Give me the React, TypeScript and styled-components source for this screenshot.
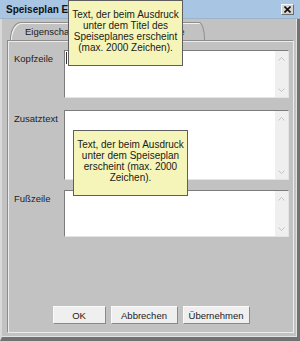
import React from 'react';
import styled, { createGlobalStyle } from 'styled-components';

const GlobalStyle = createGlobalStyle`
  html, body {
    margin: 0;
    padding: 0;
    background: #c2c2c2;
    overflow: hidden;
  }
  * {
    box-sizing: border-box;
  }
`;

const Window = styled.div`
  position: relative;
  width: 300px;
  height: 341px;
  display: flex;
  flex-direction: column;
  background: #c2c2c2;
  font-family: 'Liberation Sans', Arial, sans-serif;
  color: #1a1a1a;
  overflow: hidden;
`;

const TitleBar = styled.div`
  height: 19px;
  flex-shrink: 0;
  display: flex;
  align-items: center;
  justify-content: space-between;
  padding: 0 6px 0 6px;
  background: #a8c5e3;
  border-bottom: 1px solid #9fb3c7;
`;

const Title = styled.span`
  font-size: 10px;
  font-weight: bold;
  color: #111;
`;

const CloseButton = styled.div`
  width: 13px;
  height: 11px;
  margin-top: 1px;
  display: flex;
  align-items: center;
  justify-content: center;
  background: #d4d4d4;
  border: 1px solid;
  border-color: #f6f6f6 #6c6c6c #6c6c6c #f6f6f6;
`;

const Frame = styled.div`
  flex: 1;
  display: flex;
  flex-direction: column;
  padding: 3px 3px 4px 5px;
  border-left: 2px solid #d9d9d9;
  border-right: 3px solid #727272;
  border-bottom: 4px solid #727272;
  box-shadow: inset -1px -1px 0 #e2e2e2;
`;

const TabRow = styled.div`
  display: flex;
  height: 18px;
  padding-left: 3px;
  flex-shrink: 0;
`;

const Tab = styled.div<{ $width: number; $selected?: boolean }>`
  width: ${(p) => p.$width}px;
  height: 18px;
  padding-left: 14px;
  padding-top: 3px;
  font-size: 9.5px;
  line-height: 12px;
  white-space: nowrap;
  overflow: hidden;
  background: #c2c2c2;
  border: 1px solid #8e8e8e;
  border-bottom: none;
  border-top-left-radius: 11px 17px;
  border-top-right-radius: 6px 17px;
  box-shadow: inset 1px 1px 0 #f2f2f2;
  margin-right: -1px;
  position: relative;
  z-index: ${(p) => (p.$selected ? 2 : 1)};
`;

const Panel = styled.div`
  flex: 1;
  display: flex;
  flex-direction: column;
  padding: 9px 4px 8px 6px;
  border: 1px solid;
  border-color: #8c8c8c #ececec #ececec #8c8c8c;
  box-shadow: inset 1px 1px 0 #ececec;
`;

const Row = styled.div<{ $gap: number }>`
  display: grid;
  grid-template-columns: 50px 1fr;
  margin-bottom: ${(p) => p.$gap}px;
`;

const Label = styled.div`
  font-size: 9.5px;
  padding-top: 3px;
  color: #222;
`;

const ScrollPane = styled.div<{ $height: number }>`
  height: ${(p) => p.$height}px;
  display: flex;
  background: #fff;
  border: 1px solid;
  border-color: #7c7c7c #e4e4e4 #e4e4e4 #7c7c7c;
`;

const Editor = styled.div`
  flex: 1;
  padding: 1px 1px;
`;

const Caret = styled.div`
  width: 1px;
  height: 12px;
  background: #333;
`;

const ScrollTrack = styled.div`
  width: 13px;
  display: flex;
  flex-direction: column;
  justify-content: space-between;
  align-items: center;
  padding: 6px 0 5px;
  background: #efefef;
`;

const ButtonBar = styled.div`
  margin-top: auto;
  display: flex;
  justify-content: center;
  gap: 5px;
  padding-right: 1px;
`;

const Button = styled.div<{ $width: number }>`
  width: ${(p) => p.$width}px;
  height: 18px;
  display: flex;
  align-items: center;
  justify-content: center;
  font-size: 9.5px;
  color: #1a1a1a;
  background: #efefef;
  border: 1px solid;
  border-color: #fafafa #8a8a8a #8a8a8a #fafafa;
`;

const Tooltip = styled.div<{ $left: number; $top: number }>`
  position: absolute;
  left: ${(p) => p.$left}px;
  top: ${(p) => p.$top}px;
  width: 115px;
  padding: 8px 2px 12px;
  background: #f5f5b9;
  border: 1px solid #5e5e5e;
  font-size: 10px;
  line-height: 11px;
  text-align: center;
  color: #1a1a1a;
  z-index: 10;
`;

const Chevron = ({ up }: { up?: boolean }) => (
  <svg width="7" height="4" viewBox="0 0 7 4">
    <polyline
      points={up ? '0.5,3.5 3.5,0.5 6.5,3.5' : '0.5,0.5 3.5,3.5 6.5,0.5'}
      fill="none"
      stroke="#c4c4c4"
      strokeWidth="1"
    />
  </svg>
);

const TextField = ({ height, focused }: { height: number; focused?: boolean }) => (
  <ScrollPane $height={height}>
    <Editor>{focused && <Caret />}</Editor>
    <ScrollTrack>
      <Chevron up />
      <Chevron />
    </ScrollTrack>
  </ScrollPane>
);

const fields = [
  { label: 'Kopfzeile', height: 48, gap: 12, focused: true },
  { label: 'Zusatztext', height: 70, gap: 10 },
  { label: 'Fußzeile', height: 47, gap: 0 },
];

const App = () => {
  return (
    <>
      <GlobalStyle />
      <Window>
        <TitleBar>
          <Title>Speiseplan Eigenschaften</Title>
          <CloseButton>
            <svg width="7" height="7" viewBox="0 0 7 7">
              <path d="M0.5 0.5 L6.5 6.5 M6.5 0.5 L0.5 6.5" stroke="#111" strokeWidth="1.6" />
            </svg>
          </CloseButton>
        </TitleBar>
        <Frame>
          <TabRow>
            <Tab $width={95} $selected>
              Eigenschaften
            </Tab>
            <Tab $width={101}>Zusatzhinweise</Tab>
          </TabRow>
          <Panel>
            {fields.map((f) => (
              <Row key={f.label} $gap={f.gap}>
                <Label>{f.label}</Label>
                <TextField height={f.height} focused={f.focused} />
              </Row>
            ))}
            <ButtonBar>
              <Button $width={53}>OK</Button>
              <Button $width={67}>Abbrechen</Button>
              <Button $width={67}>Übernehmen</Button>
            </ButtonBar>
          </Panel>
        </Frame>
        <Tooltip $left={68} $top={0}>
          Text, der beim Ausdruck
          <br />
          unter dem Titel des
          <br />
          Speiseplanes erscheint
          <br />
          (max. 2000 Zeichen).
        </Tooltip>
        <Tooltip $left={73} $top={130}>
          Text, der beim Ausdruck
          <br />
          unter dem Speiseplan
          <br />
          erscheint (max. 2000
          <br />
          Zeichen).
        </Tooltip>
      </Window>
    </>
  );
};

export default App;
